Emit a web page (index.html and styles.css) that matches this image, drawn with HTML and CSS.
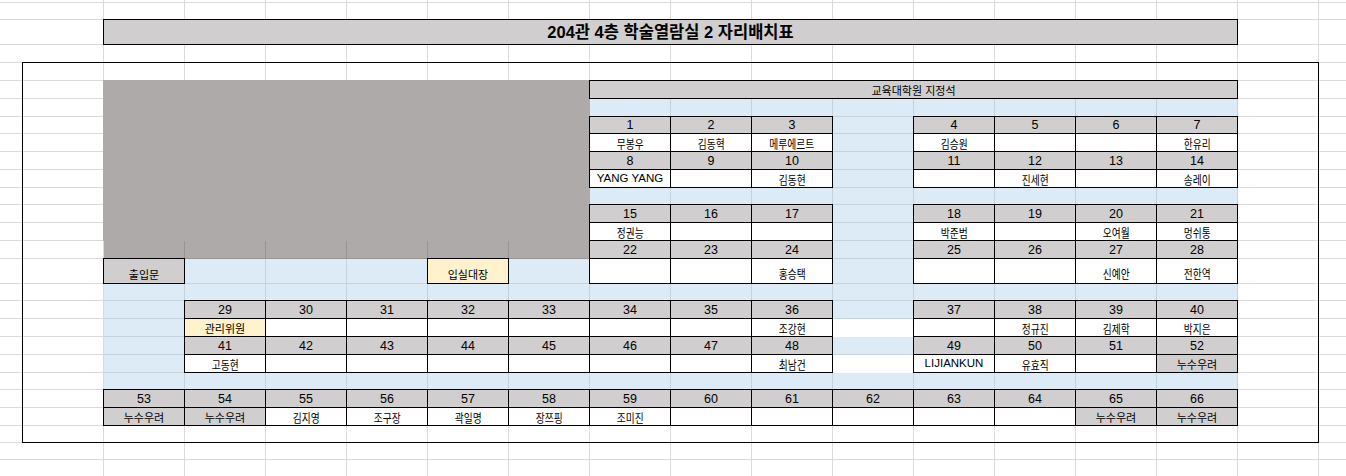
FILE: index.html
```html
<!DOCTYPE html>
<html lang="ko">
<head>
<meta charset="utf-8">
<title>204관 4층 학술열람실 2 자리배치표</title>
<link rel="stylesheet" href="styles.css">
</head>
<body>
<div class="sheet">
  <div class="box"></div>
  <div class="title">204관 4층 학술열람실 2 자리배치표</div>
  <div class="shade"></div>
  <div class="shade-row"></div>
  <div class="head">교육대학원 지정석</div>

  <div class="bl lane-top"></div>
  <div class="bl aisle-1"></div>
  <div class="bl lane-mid"></div>
  <div class="bl aisle-2"></div>
  <div class="bl hall-l"></div>
  <div class="bl hall-r"></div>
  <div class="bl lane-low"></div>
  <div class="bl side"></div>
  <div class="bl aisle-3"></div>
  <div class="bl aisle-4"></div>
  <div class="bl lane-bot"></div>
  <div class="wh gap-1"></div>
  <div class="wh gap-2"></div>

  <div class="door">출입문</div>
  <div class="log">입실대장</div>

  <div class="blk s3 rt-a blk-1">
    <div class="n">1</div><div class="n">2</div><div class="n">3</div>
    <div class="c"><span class="k">무봉우</span></div><div class="c"><span class="k">김동혁</span></div><div class="c"><span class="k">메루에르트</span></div>
    <div class="n">8</div><div class="n">9</div><div class="n">10</div>
    <div class="c lat">YANG YANG</div><div class="c"></div><div class="c"><span class="k">김동현</span></div>
  </div>

  <div class="blk s4 rt-a blk-2">
    <div class="n">4</div><div class="n">5</div><div class="n">6</div><div class="n">7</div>
    <div class="c"><span class="k">김승원</span></div><div class="c"></div><div class="c"></div><div class="c"><span class="k">한유리</span></div>
    <div class="n">11</div><div class="n">12</div><div class="n">13</div><div class="n">14</div>
    <div class="c"></div><div class="c"><span class="k">진세현</span></div><div class="c"></div><div class="c"><span class="k">송레이</span></div>
  </div>

  <div class="blk s3 rt-b blk-3">
    <div class="n">15</div><div class="n">16</div><div class="n">17</div>
    <div class="c"><span class="k">정권능</span></div><div class="c"></div><div class="c"></div>
    <div class="n">22</div><div class="n">23</div><div class="n">24</div>
    <div class="c t"></div><div class="c t"></div><div class="c t"><span class="k">홍승택</span></div>
  </div>

  <div class="blk s4 rt-b blk-4">
    <div class="n">18</div><div class="n">19</div><div class="n">20</div><div class="n">21</div>
    <div class="c"><span class="k">박준범</span></div><div class="c"></div><div class="c"><span class="k">오여월</span></div><div class="c"><span class="k">멍쉬통</span></div>
    <div class="n">25</div><div class="n">26</div><div class="n">27</div><div class="n">28</div>
    <div class="c t"></div><div class="c t"></div><div class="c t"><span class="k">신예안</span></div><div class="c t"><span class="k">전한역</span></div>
  </div>

  <div class="blk s8 rt-c blk-5">
    <div class="n">29</div><div class="n">30</div><div class="n">31</div><div class="n">32</div><div class="n">33</div><div class="n">34</div><div class="n">35</div><div class="n">36</div>
    <div class="c staff">관리위원</div><div class="c"></div><div class="c"></div><div class="c"></div><div class="c"></div><div class="c"></div><div class="c"></div><div class="c"><span class="k">조강현</span></div>
    <div class="n">41</div><div class="n">42</div><div class="n">43</div><div class="n">44</div><div class="n">45</div><div class="n">46</div><div class="n">47</div><div class="n">48</div>
    <div class="c"><span class="k">고동현</span></div><div class="c"></div><div class="c"></div><div class="c"></div><div class="c"></div><div class="c"></div><div class="c"></div><div class="c"><span class="k">최남건</span></div>
  </div>

  <div class="blk s4 rt-c blk-6">
    <div class="n">37</div><div class="n">38</div><div class="n">39</div><div class="n">40</div>
    <div class="c"></div><div class="c"><span class="k">정규진</span></div><div class="c"><span class="k">김제학</span></div><div class="c"><span class="k">박지은</span></div>
    <div class="n">49</div><div class="n">50</div><div class="n">51</div><div class="n">52</div>
    <div class="c lat">LIJIANKUN</div><div class="c"><span class="k">유효직</span></div><div class="c"></div><div class="c warn">누수우려</div>
  </div>

  <div class="blk s14 rt-d blk-7">
    <div class="n">53</div><div class="n">54</div><div class="n">55</div><div class="n">56</div><div class="n">57</div><div class="n">58</div><div class="n">59</div><div class="n">60</div><div class="n">61</div><div class="n">62</div><div class="n">63</div><div class="n">64</div><div class="n">65</div><div class="n">66</div>
    <div class="c warn">누수우려</div><div class="c warn">누수우려</div><div class="c"><span class="k">김지영</span></div><div class="c"><span class="k">조구장</span></div><div class="c"><span class="k">곽일명</span></div><div class="c"><span class="k">장쯔핑</span></div><div class="c"><span class="k">조미진</span></div><div class="c"></div><div class="c"></div><div class="c"></div><div class="c"></div><div class="c"></div><div class="c warn">누수우려</div><div class="c warn">누수우려</div>
  </div>
</div>
</body>
</html>
```

FILE: styles.css
```css
* { box-sizing: border-box; }

html, body {
  margin: 0;
  padding: 0;
  background: #fff;
}

.sheet {
  --g: #dadada;
  width: 1346px;
  height: 476px;
  overflow: hidden;
  display: grid;
  grid-template-columns: 23px repeat(16, 81px) 27px;
  grid-template-rows: 3px 17px 25px 18px 18px 18px 18px 17px 18px 18px 18px 17px 18px 18px 18px 25px 17px 18px 18px 18px 18px 17px 18px 18px 17px 17px 16px;
  background-color: #fff;
  background-image:
    repeating-linear-gradient(to right, transparent 0 80px, var(--g) 80px 81px),
    linear-gradient(to bottom,
      transparent 0 2px, var(--g) 2px 3px,
      transparent 3px 19px, var(--g) 19px 20px,
      transparent 20px 44px, var(--g) 44px 45px,
      transparent 45px 62px, var(--g) 62px 63px,
      transparent 63px 80px, var(--g) 80px 81px,
      transparent 81px 98px, var(--g) 98px 99px,
      transparent 99px 116px, var(--g) 116px 117px,
      transparent 117px 133px, var(--g) 133px 134px,
      transparent 134px 151px, var(--g) 151px 152px,
      transparent 152px 169px, var(--g) 169px 170px,
      transparent 170px 187px, var(--g) 187px 188px,
      transparent 188px 204px, var(--g) 204px 205px,
      transparent 205px 222px, var(--g) 222px 223px,
      transparent 223px 240px, var(--g) 240px 241px,
      transparent 241px 258px, var(--g) 258px 259px,
      transparent 259px 283px, var(--g) 283px 284px,
      transparent 284px 300px, var(--g) 300px 301px,
      transparent 301px 318px, var(--g) 318px 319px,
      transparent 319px 336px, var(--g) 336px 337px,
      transparent 337px 354px, var(--g) 354px 355px,
      transparent 355px 372px, var(--g) 372px 373px,
      transparent 373px 389px, var(--g) 389px 390px,
      transparent 390px 407px, var(--g) 407px 408px,
      transparent 408px 425px, var(--g) 425px 426px,
      transparent 426px 442px, var(--g) 442px 443px,
      transparent 443px 459px, var(--g) 459px 460px,
      transparent 460px 476px);
  background-position: 23px 0, 0 0;
  background-size: auto, 100% 476px;
  background-repeat: repeat-x, no-repeat;
  color: #000;
}

/* outer frame */
.box {
  grid-row: 5 / 26;
  grid-column: 2 / 18;
  margin: -1px 0 0 -1px;
  border: 1px solid #000;
}

.title {
  grid-row: 3;
  grid-column: 3 / 17;
  margin: -1px 0 0 -1px;
  border: 1px solid #000;
  background: #d0cece;
  display: flex;
  align-items: center;
  justify-content: center;
  font: bold 16.5px/20px "Liberation Sans", "Noto Sans CJK KR", sans-serif;
}

.shade {
  grid-row: 6 / 15;
  grid-column: 3 / 9;
  margin: -1px 0 0 -1px;
  background: #aeaaaa;
}

.shade-row {
  grid-row: 15;
  grid-column: 3 / 9;
  background: rgba(53, 43, 43, 0.4);
}

.head {
  grid-row: 6;
  grid-column: 9 / 17;
  margin: -1px 0 0 -1px;
  border: 1px solid #000;
  background: #d0cece;
  display: flex;
  align-items: flex-end;
  justify-content: center;
  font: 11px/15px "Noto Sans CJK KR", sans-serif;
}

/* light blue floor */
.bl { background: rgba(158, 198, 232, 0.35); }
.wh { background: #fff; }

.lane-top { grid-row: 7; grid-column: 9 / 17; }
.aisle-1  { grid-row: 8 / 12; grid-column: 12; }
.lane-mid { grid-row: 12; grid-column: 9 / 17; }
.aisle-2  { grid-row: 13 / 17; grid-column: 12; }
.hall-l   { grid-row: 16; grid-column: 4 / 7; }
.hall-r   { grid-row: 16; grid-column: 8; }
.lane-low { grid-row: 17; grid-column: 3 / 17; }
.side     { grid-row: 18 / 22; grid-column: 3; }
.aisle-3  { grid-row: 18; grid-column: 12; }
.aisle-4  { grid-row: 20; grid-column: 12; }
.lane-bot { grid-row: 22; grid-column: 3 / 17; }
.gap-1    { grid-row: 19; grid-column: 12; }
.gap-2    { grid-row: 21; grid-column: 12; }

.door,
.log {
  grid-row: 16;
  margin: -1px 0 0 -1px;
  border: 1px solid #000;
  display: flex;
  align-items: flex-end;
  justify-content: center;
  padding-bottom: 1px;
  font: 11px/15px "Noto Sans CJK KR", sans-serif;
}
.door { grid-column: 3; background: #d0cece; }
.log  { grid-column: 7; background: #fff2cc; }

/* seat blocks */
.blk { display: grid; }
.s3  { grid-template-columns: repeat(3, 81px); }
.s4  { grid-template-columns: repeat(4, 81px); }
.s8  { grid-template-columns: repeat(8, 81px); }
.s14 { grid-template-columns: repeat(14, 81px); }
.rt-a { grid-template-rows: 17px 18px 18px 18px; }
.rt-b { grid-template-rows: 18px 18px 18px 25px; }
.rt-c { grid-template-rows: 18px 18px 18px 18px; }
.rt-d { grid-template-rows: 18px 18px; }

.blk-1 { grid-row: 8 / 12;  grid-column: 9 / 12; }
.blk-2 { grid-row: 8 / 12;  grid-column: 13 / 17; }
.blk-3 { grid-row: 13 / 17; grid-column: 9 / 12; }
.blk-4 { grid-row: 13 / 17; grid-column: 13 / 17; }
.blk-5 { grid-row: 18 / 22; grid-column: 4 / 12; }
.blk-6 { grid-row: 18 / 22; grid-column: 13 / 17; }
.blk-7 { grid-row: 23 / 25; grid-column: 3 / 17; }

.n,
.c {
  margin: -1px 0 0 -1px;
  border: 1px solid #000;
  display: flex;
  align-items: flex-end;
  justify-content: center;
  white-space: nowrap;
}

.n {
  background: #d0cece;
  font: 12.5px/15px "Liberation Sans", Arial, sans-serif;
}

.c {
  background: #fff;
  font: 11px/15px "Noto Sans CJK KR", sans-serif;
}
.c.t { padding-bottom: 2px; }
.c.warn { background: #d0cece; }
.c.staff { background: #fff2cc; }
.c.lat { font: 11.5px/15px "Liberation Sans", Arial, sans-serif; padding-bottom: 1px; }

.k {
  display: inline-block;
  font: 12.5px/15px "Noto Sans CJK KR", sans-serif;
  transform: scaleX(0.78);
}
```
